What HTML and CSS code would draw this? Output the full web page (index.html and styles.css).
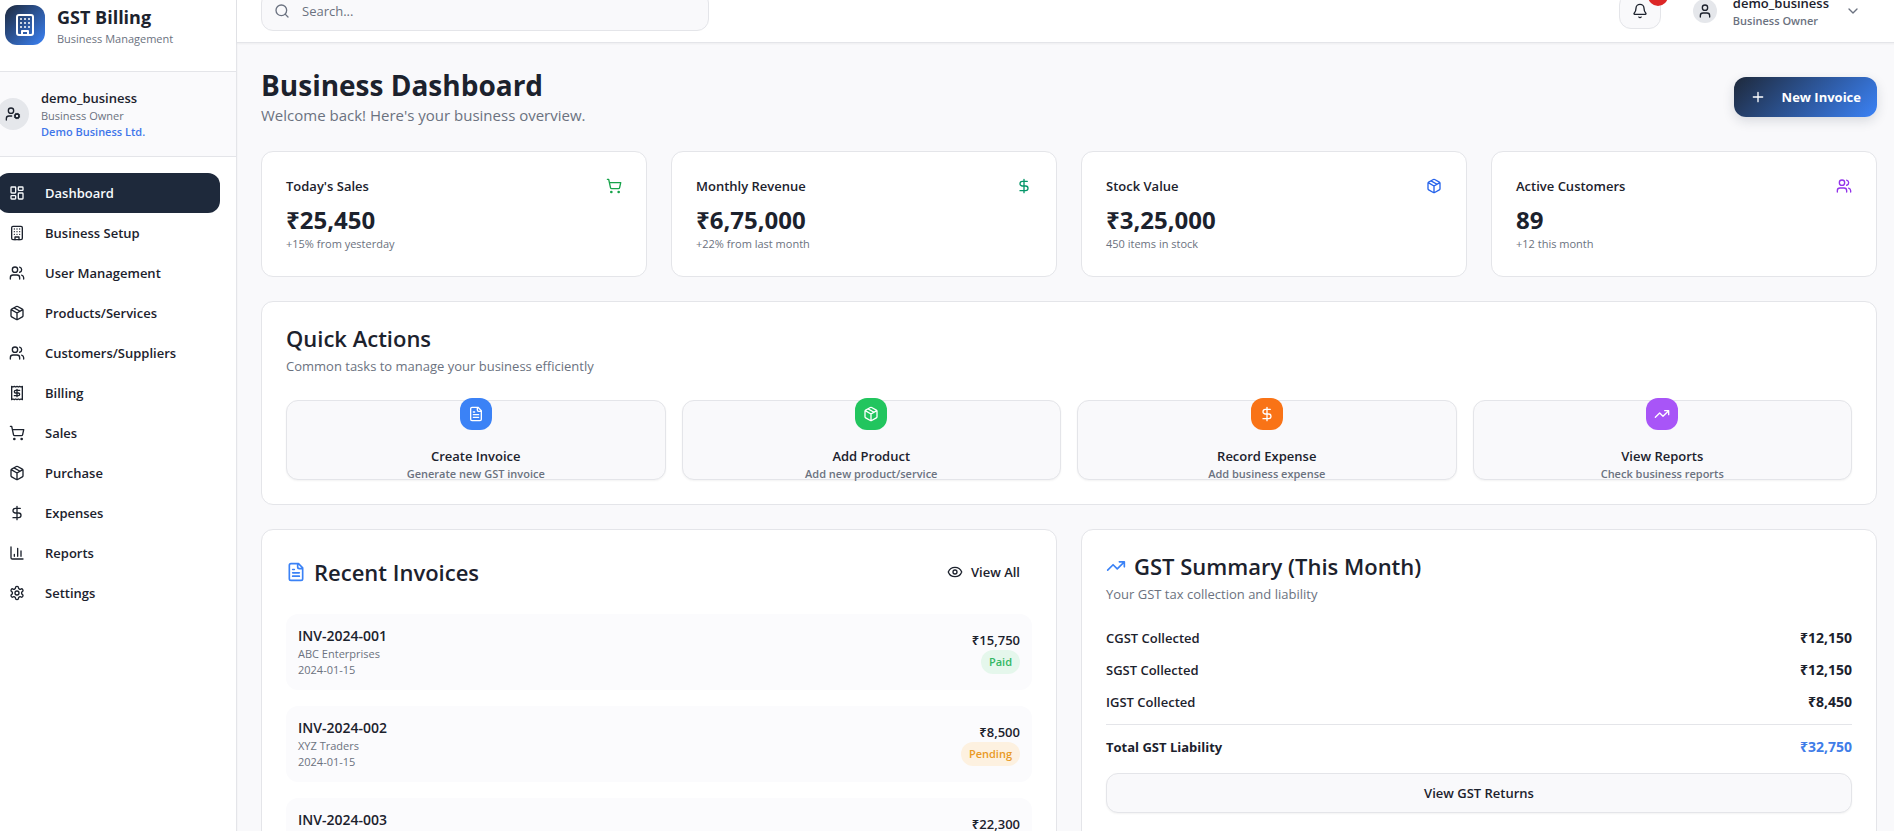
FILE: index.html
```html
<!DOCTYPE html>
<html lang="en">
<head>
<meta charset="utf-8">
<meta name="viewport" content="width=device-width, initial-scale=1">
<title>GST Billing - Business Dashboard</title>
<link rel="stylesheet" href="styles.css">
</head>
<body>
<svg class="sprite" aria-hidden="true">
  <symbol id="building" viewBox="0 0 24 24"><rect x="4" y="2" width="16" height="20" rx="2"/><path d="M9 22v-4h6v4M8 6h.01M16 6h.01M12 6h.01M12 10h.01M12 14h.01M16 10h.01M16 14h.01M8 10h.01M8 14h.01"/></symbol>
  <symbol id="grid" viewBox="0 0 24 24"><rect x="3" y="3" width="7" height="9" rx="1"/><rect x="14" y="3" width="7" height="5" rx="1"/><rect x="14" y="12" width="7" height="9" rx="1"/><rect x="3" y="16" width="7" height="5" rx="1"/></symbol>
  <symbol id="users" viewBox="0 0 24 24"><path d="M16 21v-2a4 4 0 0 0-4-4H6a4 4 0 0 0-4 4v2"/><circle cx="9" cy="7" r="4"/><path d="M22 21v-2a4 4 0 0 0-3-3.87M16 3.13a4 4 0 0 1 0 7.75"/></symbol>
  <symbol id="user" viewBox="0 0 24 24"><circle cx="12" cy="7" r="4"/><path d="M19 21v-2a4 4 0 0 0-4-4H9a4 4 0 0 0-4 4v2"/></symbol>
  <symbol id="user-cog" viewBox="0 0 24 24"><circle cx="18" cy="15" r="3"/><circle cx="9" cy="7" r="4"/><path d="M10 15H6a4 4 0 0 0-4 4v2M21.7 16.4l-.9-.3M15.2 13.9l-.9-.3M16.6 18.7l.3-.9M19.1 12.2l.3-.9M19.6 18.7l-.4-1M16.8 12.3l-.4-1M14.3 16.6l1-.4M20.7 13.8l1-.4"/></symbol>
  <symbol id="package" viewBox="0 0 24 24"><path d="M11 21.73a2 2 0 0 0 2 0l7-4A2 2 0 0 0 21 16V8a2 2 0 0 0-1-1.73l-7-4a2 2 0 0 0-2 0l-7 4A2 2 0 0 0 3 8v8a2 2 0 0 0 1 1.73zM12 22V12M3.3 7 12 12l8.7-5M7.5 4.27l9 5.15"/></symbol>
  <symbol id="receipt" viewBox="0 0 24 24"><path d="M4 2v20l2-1 2 1 2-1 2 1 2-1 2 1 2-1 2 1V2l-2 1-2-1-2 1-2-1-2 1-2-1-2 1Z"/><path d="M16 8h-6a2 2 0 1 0 0 4h4a2 2 0 1 1 0 4H8M12 17.5v-11"/></symbol>
  <symbol id="cart" viewBox="0 0 24 24"><circle cx="8" cy="21" r="1"/><circle cx="19" cy="21" r="1"/><path d="M2.05 2.05h2l2.66 12.42a2 2 0 0 0 2 1.58h9.78a2 2 0 0 0 1.95-1.57l1.65-7.43H5.12"/></symbol>
  <symbol id="dollar" viewBox="0 0 24 24"><path d="M12 2v20M17 5H9.5a3.5 3.5 0 0 0 0 7h5a3.5 3.5 0 0 1 0 7H6"/></symbol>
  <symbol id="chart" viewBox="0 0 24 24"><path d="M3 3v16a2 2 0 0 0 2 2h16M18 17V9M13 17V5M8 17v-3"/></symbol>
  <symbol id="settings" viewBox="0 0 24 24"><path d="M12.22 2h-.44a2 2 0 0 0-2 2v.18a2 2 0 0 1-1 1.73l-.43.25a2 2 0 0 1-2 0l-.15-.08a2 2 0 0 0-2.73.73l-.22.38a2 2 0 0 0 .73 2.73l.15.1a2 2 0 0 1 1 1.72v.51a2 2 0 0 1-1 1.74l-.15.09a2 2 0 0 0-.73 2.73l.22.38a2 2 0 0 0 2.73.73l.15-.08a2 2 0 0 1 2 0l.43.25a2 2 0 0 1 1 1.73V20a2 2 0 0 0 2 2h.44a2 2 0 0 0 2-2v-.18a2 2 0 0 1 1-1.73l.43-.25a2 2 0 0 1 2 0l.15.08a2 2 0 0 0 2.73-.73l.22-.39a2 2 0 0 0-.73-2.73l-.15-.08a2 2 0 0 1-1-1.74v-.5a2 2 0 0 1 1-1.74l.15-.09a2 2 0 0 0 .73-2.73l-.22-.38a2 2 0 0 0-2.73-.73l-.15.08a2 2 0 0 1-2 0l-.43-.25a2 2 0 0 1-1-1.73V4a2 2 0 0 0-2-2z"/><circle cx="12" cy="12" r="3"/></symbol>
  <symbol id="search" viewBox="0 0 24 24"><circle cx="11" cy="11" r="8"/><path d="m21 21-4.3-4.3"/></symbol>
  <symbol id="bell" viewBox="0 0 24 24"><path d="M10.27 21a2 2 0 0 0 3.46 0M3.26 15.33A1 1 0 0 0 4 17h16a1 1 0 0 0 .74-1.67C19.41 13.96 18 12.5 18 8A6 6 0 0 0 6 8c0 4.5-1.41 5.96-2.74 7.33"/></symbol>
  <symbol id="chevron" viewBox="0 0 24 24"><path d="m6 9 6 6 6-6"/></symbol>
  <symbol id="plus" viewBox="0 0 24 24"><path d="M5 12h14M12 5v14"/></symbol>
  <symbol id="file" viewBox="0 0 24 24"><path d="M15 2H6a2 2 0 0 0-2 2v16a2 2 0 0 0 2 2h12a2 2 0 0 0 2-2V7ZM14 2v4a2 2 0 0 0 2 2h4M10 9H8M16 13H8M16 17H8"/></symbol>
  <symbol id="trend" viewBox="0 0 24 24"><path d="m22 7-8.5 8.5-5-5L2 17M16 7h6v6"/></symbol>
  <symbol id="eye" viewBox="0 0 24 24"><path d="M2.06 12.35a1 1 0 0 1 0-.7 10.75 10.75 0 0 1 19.88 0 1 1 0 0 1 0 .7 10.75 10.75 0 0 1-19.88 0"/><circle cx="12" cy="12" r="3"/></symbol>
</svg>

<div class="app">
  <aside class="sidebar">
    <div class="brand">
      <span class="brand-logo"><svg class="icon icon-lg"><use href="#building"/></svg></span>
      <div>
        <div class="brand-name">GST Billing</div>
        <div class="caption">Business Management</div>
      </div>
    </div>
    <div class="account">
      <span class="avatar avatar-md"><svg class="icon"><use href="#user-cog"/></svg></span>
      <div>
        <div class="label">demo_business</div>
        <div class="caption">Business Owner</div>
        <div class="caption company">Demo Business Ltd.</div>
      </div>
    </div>
    <nav class="nav">
      <a class="nav-item active" href="#"><svg class="icon"><use href="#grid"/></svg>Dashboard</a>
      <a class="nav-item" href="#"><svg class="icon"><use href="#building"/></svg>Business Setup</a>
      <a class="nav-item" href="#"><svg class="icon"><use href="#users"/></svg>User Management</a>
      <a class="nav-item" href="#"><svg class="icon"><use href="#package"/></svg>Products/Services</a>
      <a class="nav-item" href="#"><svg class="icon"><use href="#users"/></svg>Customers/Suppliers</a>
      <a class="nav-item" href="#"><svg class="icon"><use href="#receipt"/></svg>Billing</a>
      <a class="nav-item" href="#"><svg class="icon"><use href="#cart"/></svg>Sales</a>
      <a class="nav-item" href="#"><svg class="icon"><use href="#package"/></svg>Purchase</a>
      <a class="nav-item" href="#"><svg class="icon"><use href="#dollar"/></svg>Expenses</a>
      <a class="nav-item" href="#"><svg class="icon"><use href="#chart"/></svg>Reports</a>
      <a class="nav-item" href="#"><svg class="icon"><use href="#settings"/></svg>Settings</a>
    </nav>
  </aside>

  <div class="content">
    <header class="topbar">
      <label class="search">
        <svg class="icon"><use href="#search"/></svg>
        <input class="search-input" type="search" placeholder="Search..." aria-label="Search">
      </label>
      <div class="topbar-actions">
        <button class="bell" type="button" aria-label="Notifications">
          <svg class="icon"><use href="#bell"/></svg>
          <span class="bell-count">3</span>
        </button>
        <button class="profile" type="button">
          <span class="avatar avatar-sm"><svg class="icon"><use href="#user"/></svg></span>
          <span class="profile-text">
            <span class="label">demo_business</span>
            <span class="caption strong">Business Owner</span>
          </span>
          <svg class="icon chevron"><use href="#chevron"/></svg>
        </button>
      </div>
    </header>

    <main class="main">
      <div class="page-head">
        <div>
          <h1 class="page-title">Business Dashboard</h1>
          <p class="page-sub">Welcome back! Here's your business overview.</p>
        </div>
        <button class="btn-primary" type="button"><svg class="icon"><use href="#plus"/></svg>New Invoice</button>
      </div>

      <section class="stats">
        <article class="card">
          <div class="stat-head"><h2 class="label">Today's Sales</h2><svg class="icon green"><use href="#cart"/></svg></div>
          <div class="stat-value">₹25,450</div>
          <div class="caption">+15% from yesterday</div>
        </article>
        <article class="card">
          <div class="stat-head"><h2 class="label">Monthly Revenue</h2><svg class="icon emerald"><use href="#dollar"/></svg></div>
          <div class="stat-value">₹6,75,000</div>
          <div class="caption">+22% from last month</div>
        </article>
        <article class="card">
          <div class="stat-head"><h2 class="label">Stock Value</h2><svg class="icon blue"><use href="#package"/></svg></div>
          <div class="stat-value">₹3,25,000</div>
          <div class="caption">450 items in stock</div>
        </article>
        <article class="card">
          <div class="stat-head"><h2 class="label">Active Customers</h2><svg class="icon purple"><use href="#users"/></svg></div>
          <div class="stat-value">89</div>
          <div class="caption">+12 this month</div>
        </article>
      </section>

      <section class="card">
        <h2 class="card-title">Quick Actions</h2>
        <p class="card-sub">Common tasks to manage your business efficiently</p>
        <div class="actions">
          <button class="action" type="button">
            <span class="action-icon bg-blue"><svg class="icon"><use href="#file"/></svg></span>
            <span><span class="label">Create Invoice</span><span class="caption strong">Generate new GST invoice</span></span>
          </button>
          <button class="action" type="button">
            <span class="action-icon bg-green"><svg class="icon"><use href="#package"/></svg></span>
            <span><span class="label">Add Product</span><span class="caption strong">Add new product/service</span></span>
          </button>
          <button class="action" type="button">
            <span class="action-icon bg-orange"><svg class="icon"><use href="#dollar"/></svg></span>
            <span><span class="label">Record Expense</span><span class="caption strong">Add business expense</span></span>
          </button>
          <button class="action" type="button">
            <span class="action-icon bg-purple"><svg class="icon"><use href="#trend"/></svg></span>
            <span><span class="label">View Reports</span><span class="caption strong">Check business reports</span></span>
          </button>
        </div>
      </section>

      <div class="columns">
        <section class="card">
          <div class="card-head">
            <h2 class="card-title"><svg class="icon icon-lg"><use href="#file"/></svg>Recent Invoices</h2>
            <button class="btn-ghost" type="button"><svg class="icon"><use href="#eye"/></svg>View All</button>
          </div>
          <ul class="invoices">
            <li class="invoice">
              <div><div class="label invoice-no">INV-2024-001</div><div class="caption">ABC Enterprises</div><div class="caption">2024-01-15</div></div>
              <div class="invoice-right"><span class="label">₹15,750</span><span class="badge paid">Paid</span></div>
            </li>
            <li class="invoice">
              <div><div class="label invoice-no">INV-2024-002</div><div class="caption">XYZ Traders</div><div class="caption">2024-01-15</div></div>
              <div class="invoice-right"><span class="label">₹8,500</span><span class="badge pending">Pending</span></div>
            </li>
            <li class="invoice">
              <div><div class="label invoice-no">INV-2024-003</div><div class="caption">PQR Industries</div><div class="caption">2024-01-14</div></div>
              <div class="invoice-right"><span class="label">₹22,300</span><span class="badge paid">Paid</span></div>
            </li>
          </ul>
        </section>

        <section class="card">
          <h2 class="card-title"><svg class="icon icon-lg"><use href="#trend"/></svg>GST Summary (This Month)</h2>
          <p class="card-sub">Your GST tax collection and liability</p>
          <dl class="tax">
            <div class="tax-row"><dt>CGST Collected</dt><dd>₹12,150</dd></div>
            <div class="tax-row"><dt>SGST Collected</dt><dd>₹12,150</dd></div>
            <div class="tax-row"><dt>IGST Collected</dt><dd>₹8,450</dd></div>
            <div class="tax-row total"><dt>Total GST Liability</dt><dd>₹32,750</dd></div>
          </dl>
          <button class="btn-outline" type="button">View GST Returns</button>
        </section>
      </div>
    </main>
  </div>
</div>
</body>
</html>
```
FILE: styles.css
```css
:root {
  --ink: #1c222d;
  --muted: #6b7280;
  --line: #e4e5e9;
  --surface: #f9f9fb;
  --navy: #1e293b;
  --blue: #3b82f6;
}

* { box-sizing: border-box; margin: 0; padding: 0; }

body {
  height: 100vh;
  overflow: hidden;
  background: var(--surface);
  color: var(--ink);
  font-family: "Open Sans", "Noto Sans", sans-serif;
  font-size: 13px;
  line-height: 20px;
}

button, input { font: inherit; color: inherit; }
button { cursor: pointer; }
a { color: inherit; text-decoration: none; }
ul { list-style: none; }

.sprite { position: absolute; width: 0; height: 0; }

.icon {
  flex: none;
  width: 16px;
  height: 16px;
  fill: none;
  stroke: currentColor;
  stroke-width: 2;
  stroke-linecap: round;
  stroke-linejoin: round;
}
.icon-lg { width: 20px; height: 20px; }

.label { display: block; font-size: 13px; font-weight: 600; line-height: 20px; }
.caption { display: block; font-size: 11px; font-weight: 400; line-height: 16px; color: var(--muted); }
.strong { font-weight: 600; }

.green { color: #16a34a; }
.emerald { color: #059669; }
.blue { color: #2563eb; }
.purple { color: #9333ea; }
.bg-blue { background: #3b82f6; }
.bg-green { background: #22c55e; }
.bg-orange { background: #f97316; }
.bg-purple { background: #a855f7; }

/* Shell, scrolled slightly past its top-left corner */
.app { display: flex; min-height: calc(100vh + 21px); margin: -21px -7px 0 -19px; }

.sidebar {
  flex: none;
  width: 256px;
  background: #fff;
  border-right: 1px solid var(--line);
  box-shadow: 0 1px 2px rgb(0 0 0 / 5%);
}
.brand { display: flex; align-items: center; gap: 12px; padding: 24px; border-bottom: 1px solid var(--line); }
.brand-logo {
  display: grid;
  place-items: center;
  width: 40px;
  height: 40px;
  border-radius: 12px;
  color: #fff;
  background: linear-gradient(135deg, var(--navy), var(--blue));
}
.brand-logo .icon { width: 24px; height: 24px; }
.brand-name { font-size: 18px; font-weight: 700; line-height: 28px; }

.account { display: flex; align-items: center; gap: 12px; padding: 16px; background: #fafafc; border-bottom: 1px solid var(--line); }
.company { color: #3f76ea; font-weight: 600; }
.avatar { display: grid; place-items: center; flex: none; border-radius: 50%; background: #e5e7eb; }
.avatar-md { width: 32px; height: 32px; }
.avatar-sm { width: 24px; height: 24px; }

.nav { padding: 16px; }
.nav-item { display: flex; align-items: center; gap: 20px; height: 40px; padding: 0 12px; border-radius: 12px; font-weight: 600; }
.nav-item.active { background: var(--navy); color: #f8fafc; }

.content { flex: 1; min-width: 0; }
.topbar {
  display: flex;
  align-items: center;
  justify-content: space-between;
  height: 64px;
  padding: 0 24px;
  background: #fff;
  border-bottom: 1px solid var(--line);
  box-shadow: 0 1px 2px rgb(0 0 0 / 5%);
}
.search {
  display: flex;
  align-items: center;
  gap: 12px;
  width: 448px;
  height: 40px;
  padding: 0 12px;
  border: 1px solid var(--line);
  border-radius: 12px;
  background: var(--surface);
  color: var(--muted);
}
.search-input { flex: 1; min-width: 0; border: 0; outline: 0; background: none; }
.search-input::placeholder { color: var(--muted); opacity: 1; }
.topbar-actions { display: flex; align-items: center; gap: 16px; }
.bell { position: relative; display: grid; place-items: center; width: 42px; height: 36px; border: 1px solid var(--line); border-radius: 12px; background: var(--surface); }
.bell-count {
  position: absolute;
  top: -8px;
  right: -8px;
  width: 20px;
  height: 20px;
  border-radius: 50%;
  background: #dc2626;
  color: #fff;
  font-size: 12px;
  font-weight: 600;
}
.profile { display: flex; align-items: center; gap: 16px; padding: 0 16px; border: 0; background: none; text-align: left; }
.chevron { color: var(--muted); }

.main { display: grid; gap: 24px; padding: 24px; }
.page-head { display: flex; align-items: center; justify-content: space-between; }
.page-title { font-size: 28px; font-weight: 700; line-height: 36px; }
.page-sub { font-size: 15px; line-height: 24px; color: var(--muted); }
.btn-primary {
  display: flex;
  align-items: center;
  gap: 16px;
  height: 40px;
  padding: 0 16px;
  border: 0;
  border-radius: 12px;
  color: #fff;
  font-weight: 700;
  background: linear-gradient(135deg, var(--navy), var(--blue));
  box-shadow: 0 4px 12px rgb(30 41 59 / 15%);
}

.card { padding: 24px; border: 1px solid var(--line); border-radius: 12px; background: #fff; }
.stats { display: grid; grid-template-columns: repeat(4, 1fr); gap: 24px; }
.stat-head { display: flex; align-items: center; justify-content: space-between; margin-bottom: 8px; }
.stat-value { font-size: 24px; font-weight: 700; line-height: 32px; }

.card-title { display: flex; align-items: center; gap: 8px; font-size: 22px; font-weight: 600; line-height: 24px; }
.card-title .icon { color: var(--blue); }
.card-sub { margin-top: 6px; color: var(--muted); }

.actions { display: grid; grid-template-columns: repeat(4, 1fr); gap: 16px; margin-top: 24px; }
.action {
  display: flex;
  flex-direction: column;
  align-items: center;
  justify-content: center;
  gap: 16px;
  height: 80px;
  border: 1px solid var(--line);
  border-radius: 12px;
  background: var(--surface);
  box-shadow: 0 1px 2px rgb(0 0 0 / 5%);
}
.action-icon { display: grid; place-items: center; flex: none; width: 32px; height: 32px; border-radius: 12px; color: #fff; }

.columns { display: grid; grid-template-columns: repeat(2, 1fr); gap: 24px; }
.card-head { display: flex; align-items: center; justify-content: space-between; }
.btn-ghost { display: flex; align-items: center; gap: 8px; height: 36px; padding: 0 12px; border: 0; border-radius: 12px; background: none; font-weight: 600; }
.invoices { display: grid; gap: 16px; margin-top: 24px; }
.invoice { display: flex; align-items: center; justify-content: space-between; padding: 12px; border-radius: 12px; background: #fbfbfd; }
.invoice-no { font-size: 14px; }
.invoice-right { display: flex; flex-direction: column; align-items: flex-end; }
.badge { padding: 4px 8px; border-radius: 12px; font-size: 11px; font-weight: 600; line-height: 16px; }
.paid { color: #33b864; background: #e5f7ec; }
.pending { color: #e99a25; background: #fdf1e0; }

.tax { display: grid; gap: 12px; margin-top: 24px; font-weight: 600; }
.tax-row { display: flex; justify-content: space-between; }
.tax-row dd { font-size: 14px; font-weight: 700; }
.total { padding-top: 12px; border-top: 1px solid var(--line); font-weight: 700; }
.total dd { color: #3f7de8; }
.btn-outline {
  width: 100%;
  height: 40px;
  margin-top: 16px;
  border: 1px solid var(--line);
  border-radius: 12px;
  background: var(--surface);
  box-shadow: 0 1px 2px rgb(0 0 0 / 5%);
  font-weight: 600;
}
```
